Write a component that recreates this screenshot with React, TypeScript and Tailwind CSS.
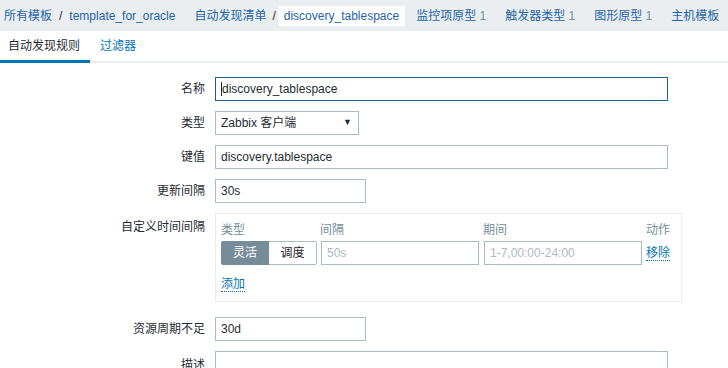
import React from "react";

const font = { fontFamily: '"Liberation Sans", Arial, "Noto Sans CJK SC", sans-serif' };

function Row({
  label,
  children,
  top = false,
  className = "",
}: {
  label: string;
  children: React.ReactNode;
  top?: boolean;
  className?: string;
}) {
  return (
    <div className={`flex ${top ? "items-start" : "items-center"} gap-[10px] ${className}`}>
      <div className={`w-[205px] text-right text-[12px] text-[#1f2c33] ${top ? "pt-[5px]" : ""}`}>{label}</div>
      {children}
    </div>
  );
}

export default function App() {
  return (
    <div className="w-[728px] h-[368px] overflow-hidden bg-white" style={font}>
      {/* breadcrumbs */}
      <div className="h-[31px] bg-[#ebeef0] flex items-center text-[12px] text-[#1f65a6] whitespace-nowrap">
        <span className="ml-[4px]">所有模板</span>
        <span className="mx-[7px] text-[#1f2c33]">/</span>
        <span>template_for_oracle</span>
        <span className="ml-[19px]">自动发现清单</span>
        <span className="ml-[6px] mr-[2px] text-[#1f2c33]">/</span>
        <span className="h-[20px] flex items-center bg-white px-[6px] rounded-[2px]">discovery_tablespace</span>
        <span className="ml-[11px]">
          监控项原型 <span className="text-[#768d99]">1</span>
        </span>
        <span className="ml-[19px]">
          触发器类型 <span className="text-[#768d99]">1</span>
        </span>
        <span className="ml-[19px]">
          图形原型 <span className="text-[#768d99]">1</span>
        </span>
        <span className="ml-[19px]">主机模板</span>
      </div>

      {/* tabs */}
      <div className="h-[32px] flex items-stretch border-b-2 border-[#ebeef0] text-[12px]">
        <div className="w-[90px] flex items-center pl-[8px] text-[#1f2c33] border-b-[3px] border-[#0275b8] -mb-[2px]">
          自动发现规则
        </div>
        <div className="flex items-center pl-[10px] text-[#0275b8]">过滤器</div>
      </div>

      {/* form */}
      <div className="pt-[14px] flex flex-col gap-[10px]">
        <Row label="名称">
          <div className="w-[453px] h-[24px] border border-[#1c5f8d] flex items-center px-[5px] text-[12px] text-[#1f2c33]">
            <span className="w-px h-[14px] bg-[#1f2c33]" />
            discovery_tablespace
          </div>
        </Row>
        <Row label="类型">
          <div className="w-[144px] h-[24px] border border-[#acbbc2] flex items-center justify-between px-[5px] text-[12px] text-[#1f2c33]">
            <span>Zabbix 客户端</span>
            <span className="text-[9px] pr-[1px]">▼</span>
          </div>
        </Row>
        <Row label="键值">
          <div className="w-[453px] h-[24px] border border-[#acbbc2] flex items-center px-[5px] text-[12px] text-[#1f2c33]">
            discovery.tablespace
          </div>
        </Row>
        <Row label="更新间隔">
          <div className="w-[151px] h-[24px] border border-[#acbbc2] flex items-center px-[5px] text-[12px] text-[#1f2c33]">
            30s
          </div>
        </Row>
        <Row label="自定义时间间隔" top>
          <div className="w-[467px] h-[89px] border border-[#ebeef0] px-[5px] pt-[7px] text-[12px]">
            <div className="flex text-[#768d99] h-[16px]">
              <span className="w-[99px]">类型</span>
              <span className="w-[163px]">间隔</span>
              <span className="w-[163px]">期间</span>
              <span>动作</span>
            </div>
            <div className="flex items-center mt-[4px] gap-[4px]">
              <div className="flex w-[96px] h-[24px]">
                <div className="w-[48px] bg-[#768d99] text-white flex items-center justify-center rounded-l-[2px]">灵活</div>
                <div className="w-[48px] border border-[#acbbc2] border-l-0 text-[#1f2c33] flex items-center justify-center rounded-r-[2px]">调度</div>
              </div>
              <div className="w-[158px] h-[24px] border border-[#acbbc2] flex items-center px-[5px] text-[#acbbc2]">50s</div>
              <div className="w-[158px] h-[24px] border border-[#acbbc2] flex items-center px-[5px] ml-[1px] text-[#acbbc2]">1-7,00:00-24:00</div>
              <span className="text-[#0275b8] border-b border-dotted border-[#0275b8] leading-[14px]">移除</span>
            </div>
            <div className="mt-[10px]">
              <span className="text-[#0275b8] border-b border-dotted border-[#0275b8] leading-[14px]">添加</span>
            </div>
          </div>
        </Row>
        <Row label="资源周期不足" className="mt-[5px]">
          <div className="w-[151px] h-[24px] border border-[#acbbc2] flex items-center px-[5px] text-[12px] text-[#1f2c33]">
            30d
          </div>
        </Row>
        <Row label="描述" top>
          <div className="w-[453px] h-[60px] border border-[#acbbc2]" />
        </Row>
      </div>
    </div>
  );
}
